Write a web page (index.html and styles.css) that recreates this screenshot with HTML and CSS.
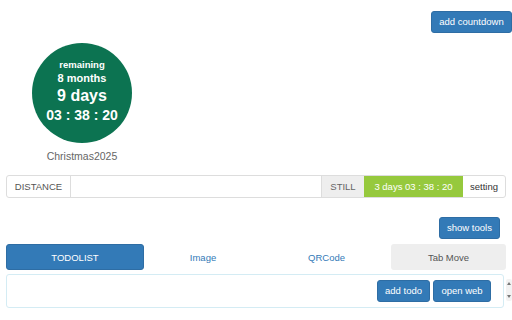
FILE: index.html
```html
<!DOCTYPE html>
<html>
<head>
<meta charset="utf-8">
<link rel="stylesheet" href="styles.css">
</head>
<body>
<div class="top">
  <button class="btn">add countdown</button>
</div>
<div class="countdown">
  <div class="circle">
    <div class="l1">remaining</div>
    <div class="l2">8 months</div>
    <div class="l3">9 days</div>
    <div class="l4">03 : 38 : 20</div>
  </div>
  <div class="name">Christmas2025</div>
</div>
<div class="bar">
  <div class="cell label">DISTANCE</div>
  <div class="cell fill"></div>
  <div class="cell still">STILL</div>
  <div class="cell green">3 days 03 : 38 : 20</div>
  <div class="cell setting">setting</div>
</div>
<div class="tools">
  <button class="btn">show tools</button>
</div>
<div class="tabs">
  <div class="tab active">TODOLIST</div>
  <div class="tab link">Image</div>
  <div class="tab link">QRCode</div>
  <div class="tab gray">Tab Move</div>
</div>
<div class="panelrow">
  <div class="panel">
    <button class="btn">add todo</button>
    <button class="btn">open web</button>
  </div>
  <div class="spin"><span class="up"></span><span class="down"></span></div>
</div>
</body>
</html>
```
FILE: styles.css
```css
html, body { margin: 0; padding: 0; background: #fff; }
body { font-family: "Liberation Sans", Arial, sans-serif; width: 512px; height: 320px; overflow: hidden; }
.btn {
  background: #337ab7; color: #fff; border: 1px solid #2e6da4; border-radius: 3px;
  font-family: "Liberation Sans", Arial, sans-serif; font-size: 9.5px; height: 22px; padding: 0 8px;
  line-height: 20px; margin: 0; cursor: pointer;
}
.top { display: flex; justify-content: flex-end; padding-top: 11px; }
.top .btn { width: 81px; padding: 0; }
.countdown { margin-top: 10px; margin-left: 32px; width: 100px; display: flex; flex-direction: column; align-items: center; }
.circle {
  width: 100px; height: 100px; border-radius: 50%; background: #0c7351; color: #fff; font-weight: bold;
  display: flex; flex-direction: column; align-items: center; justify-content: center; text-align: center;
  padding-bottom: 3px; box-sizing: border-box;
}
.l1 { font-size: 9.5px; line-height: 13px; }
.l2 { font-size: 11px; line-height: 15px; }
.l3 { font-size: 16px; line-height: 19px; }
.l4 { font-size: 14px; line-height: 21px; }
.name { color: #666; font-size: 10.5px; margin-top: 7px; line-height: 13px; }
.bar {
  margin: 12px 6px 0 6px; height: 23px; box-sizing: border-box; border: 1px solid #ddd; border-radius: 3px;
  display: flex; font-size: 9.5px; color: #555;
}
.cell { display: flex; align-items: center; justify-content: center; }
.label { width: 63px; border-right: 1px solid #ddd; }
.fill { flex: 1; }
.still { width: 42px; background: #eee; color: #666; border-left: 1px solid #ddd; }
.green { width: 99px; background: #96c93d; color: #fff; }
.setting { width: 42px; color: #333; }
.tools { display: flex; justify-content: flex-end; padding-right: 12px; margin-top: 19px; }
.tools .btn { width: 61px; padding: 0; }
.tabs { display: grid; grid-template-columns: 138px 118px 129px 115px; margin: 5px 6px 0 6px; height: 26px; font-size: 9.5px; }
.tab { display: flex; align-items: center; justify-content: center; border-radius: 3px; }
.active { background: #337ab7; color: #fff; border: 1px solid #2e6da4; }
.link { color: #337ab7; }
.gray { background: #eee; color: #555; }
.panelrow { display: flex; margin-top: 4px; margin-left: 6px; }
.panel {
  width: 500px; height: 34px; box-sizing: border-box; border: 1px solid #d4ecf4; border-radius: 3px;
  display: flex; justify-content: flex-end; align-items: center; gap: 3px; padding-right: 12px;
}
.panel .btn { padding: 0 7px; }
.panel .btn:first-child { width: 53px; padding: 0; }
.panel .btn:last-child { width: 58px; padding: 0; }
.spin { margin-left: 2px; margin-top: 5px; width: 6px; height: 22px; background: #f2f2f2; border-radius: 2px; position: relative; }
.up, .down { position: absolute; left: 1px; width: 0; height: 0; border-left: 2px solid transparent; border-right: 2px solid transparent; }
.up { top: 3px; border-bottom: 3px solid #777; }
.down { bottom: 3px; border-top: 3px solid #777; }
```
